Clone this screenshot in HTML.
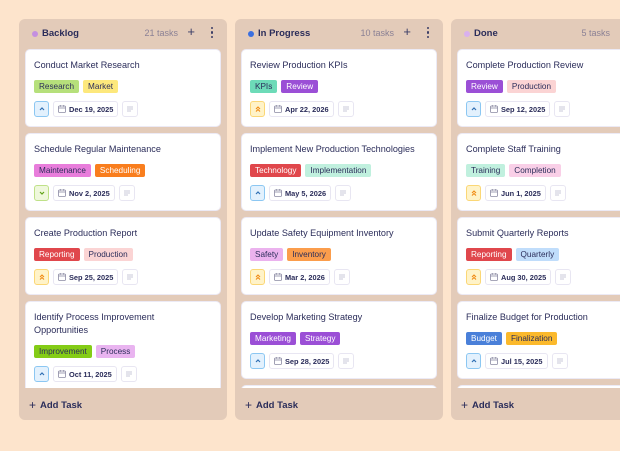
<!DOCTYPE html>
<html><head><meta charset="utf-8">
<style>
*{box-sizing:border-box;margin:0;padding:0}
body{width:620px;height:451px;background:#fde4cc;font-family:"Liberation Sans",sans-serif;position:relative;overflow:hidden;color:#2b2d5a}
.col{position:absolute;top:19px;width:208px;height:401px;background:#e3cbb9;border-radius:6px}
.hd{position:absolute;top:0;left:0;right:0;height:30px}
.dot{position:absolute;left:13px;top:12px;width:6px;height:6px;border-radius:50%}
.name{position:absolute;left:23px;top:9px;font-size:9.5px;font-weight:bold;color:#2b2d5a}
.cnt{position:absolute;right:49px;top:9px;font-size:9px;color:#8b8195}
.plus{position:absolute;right:32px;top:5px;font-size:13px;color:#3a3d66}
.more{position:absolute;right:13px;top:8px;width:3px;height:12px}
.more i{display:block;width:2.4px;height:2.4px;background:#3a3d66;border-radius:50%;margin-bottom:2px}
.list{position:absolute;top:30px;left:6px;right:6px;height:339px;overflow:hidden}
.card{background:#fff;border-radius:5px;border:1px solid #eceaf5;margin-bottom:6px;padding:0 8px;position:relative;height:78px}
.t{position:absolute;left:8px;top:9px;font-size:9.1px;line-height:13px;color:#2b2d5a;width:170px}
.tags{position:absolute;left:8px;top:30px;display:flex;gap:4px}
.tag{height:13px;line-height:13px;padding:0 5px;border-radius:2px;font-size:8.2px;color:#2b2d5a}
.w{color:#fff}
.ft{position:absolute;left:8px;top:51px;display:flex;gap:4px}
.pr{width:15px;height:16px;border-radius:3px;border:1px solid;display:flex;align-items:center;justify-content:center}
.dt{height:16px;border:1px solid #e8e6f2;border-radius:3px;font-size:7.4px;font-weight:bold;display:flex;align-items:center;padding:0 4px 0 4px;gap:3px;color:#2b2d5a}
.nt{width:16px;height:16px;border:1px solid #e8e6f2;border-radius:3px;display:flex;align-items:center;justify-content:center}
.add{position:absolute;left:10px;top:378px;font-size:9.5px;color:#2b2d5a;font-weight:bold}
.add span{font-weight:normal;font-size:12px;margin-right:4px;position:relative;top:1px}
.up{background:#e3f1fd;border-color:#8cc7f2}
.dn{background:#eff8dc;border-color:#bfe188}
.hi{background:#fff3c8;border-color:#fbd776}
</style></head><body>

<svg width="0" height="0" style="position:absolute">
<defs>
<symbol id="cal" viewBox="0 0 8 8"><rect x="0.5" y="1" width="7" height="6.5" rx="1" fill="none" stroke="#8b8aa3" stroke-width="0.8"/><line x1="0.5" y1="3" x2="7.5" y2="3" stroke="#8b8aa3" stroke-width="0.8"/><line x1="2.3" y1="0" x2="2.3" y2="1.8" stroke="#8b8aa3" stroke-width="0.8"/><line x1="5.7" y1="0" x2="5.7" y2="1.8" stroke="#8b8aa3" stroke-width="0.8"/></symbol>
<symbol id="lines" viewBox="0 0 8 8"><path d="M1 2h6M1 4h6M1 6h4" stroke="#b8b7cc" stroke-width="0.8"/></symbol>
<symbol id="u" viewBox="0 0 8 8"><path d="M2 5l2-2 2 2" fill="none" stroke="#2f6fb3" stroke-width="1.2"/></symbol>
<symbol id="d" viewBox="0 0 8 8"><path d="M2 3l2 2 2-2" fill="none" stroke="#5fa215" stroke-width="1.2"/></symbol>
<symbol id="uu" viewBox="0 0 8 8"><path d="M2 4l2-2 2 2M2 6.5l2-2 2 2" fill="none" stroke="#f08a12" stroke-width="1.1"/></symbol>
</defs></svg>

<div class="col" style="left:19px">
 <div class="hd"><div class="dot" style="background:#c48fe0"></div><div class="name">Backlog</div><div class="cnt">21 tasks</div><div class="plus">+</div><div class="more"><i></i><i></i><i></i></div></div>
 <div class="list">
  <div class="card"><div class="t">Conduct Market Research</div><div class="tags"><span class="tag" style="background:#b6e07b">Research</span><span class="tag" style="background:#fde87c">Market</span></div><div class="ft"><div class="pr up"><svg width="8" height="8"><use href="#u"/></svg></div><div class="dt"><svg width="8" height="8"><use href="#cal"/></svg>Dec 19, 2025</div><div class="nt"><svg width="8" height="8"><use href="#lines"/></svg></div></div></div>
  <div class="card"><div class="t">Schedule Regular Maintenance</div><div class="tags"><span class="tag" style="background:#e87ddb">Maintenance</span><span class="tag w" style="background:#f97e1e">Scheduling</span></div><div class="ft"><div class="pr dn"><svg width="8" height="8"><use href="#d"/></svg></div><div class="dt"><svg width="8" height="8"><use href="#cal"/></svg>Nov 2, 2025</div><div class="nt"><svg width="8" height="8"><use href="#lines"/></svg></div></div></div>
  <div class="card"><div class="t">Create Production Report</div><div class="tags"><span class="tag w" style="background:#e0474c">Reporting</span><span class="tag" style="background:#fbd4d4">Production</span></div><div class="ft"><div class="pr hi"><svg width="8" height="8"><use href="#uu"/></svg></div><div class="dt"><svg width="8" height="8"><use href="#cal"/></svg>Sep 25, 2025</div><div class="nt"><svg width="8" height="8"><use href="#lines"/></svg></div></div></div>
  <div class="card" style="height:92px"><div class="t">Identify Process Improvement Opportunities</div><div class="tags" style="top:43px"><span class="tag" style="background:#84cc16">Improvement</span><span class="tag" style="background:#e9b4f0">Process</span></div><div class="ft" style="top:64px"><div class="pr up"><svg width="8" height="8"><use href="#u"/></svg></div><div class="dt"><svg width="8" height="8"><use href="#cal"/></svg>Oct 11, 2025</div><div class="nt"><svg width="8" height="8"><use href="#lines"/></svg></div></div></div>
 </div>
 <div class="add"><span>+</span>Add Task</div>
</div>

<div class="col" style="left:235px">
 <div class="hd"><div class="dot" style="background:#3b6fe0"></div><div class="name">In Progress</div><div class="cnt">10 tasks</div><div class="plus">+</div><div class="more"><i></i><i></i><i></i></div></div>
 <div class="list">
  <div class="card"><div class="t">Review Production KPIs</div><div class="tags"><span class="tag" style="background:#6ddbb8">KPIs</span><span class="tag w" style="background:#9b4fd6">Review</span></div><div class="ft"><div class="pr hi"><svg width="8" height="8"><use href="#uu"/></svg></div><div class="dt"><svg width="8" height="8"><use href="#cal"/></svg>Apr 22, 2026</div><div class="nt"><svg width="8" height="8"><use href="#lines"/></svg></div></div></div>
  <div class="card"><div class="t">Implement New Production Technologies</div><div class="tags"><span class="tag w" style="background:#e0474c">Technology</span><span class="tag" style="background:#c0f0de">Implementation</span></div><div class="ft"><div class="pr up"><svg width="8" height="8"><use href="#u"/></svg></div><div class="dt"><svg width="8" height="8"><use href="#cal"/></svg>May 5, 2026</div><div class="nt"><svg width="8" height="8"><use href="#lines"/></svg></div></div></div>
  <div class="card"><div class="t">Update Safety Equipment Inventory</div><div class="tags"><span class="tag" style="background:#ebb2ee">Safety</span><span class="tag" style="background:#fb9d4c">Inventory</span></div><div class="ft"><div class="pr hi"><svg width="8" height="8"><use href="#uu"/></svg></div><div class="dt"><svg width="8" height="8"><use href="#cal"/></svg>Mar 2, 2026</div><div class="nt"><svg width="8" height="8"><use href="#lines"/></svg></div></div></div>
  <div class="card"><div class="t">Develop Marketing Strategy</div><div class="tags"><span class="tag w" style="background:#9b4fd6">Marketing</span><span class="tag w" style="background:#9b4fd6">Strategy</span></div><div class="ft"><div class="pr up"><svg width="8" height="8"><use href="#u"/></svg></div><div class="dt"><svg width="8" height="8"><use href="#cal"/></svg>Sep 28, 2025</div><div class="nt"><svg width="8" height="8"><use href="#lines"/></svg></div></div></div>
  <div class="card"></div>
 </div>
 <div class="add"><span>+</span>Add Task</div>
</div>

<div class="col" style="left:451px">
 <div class="hd"><div class="dot" style="background:#d9b0ee"></div><div class="name">Done</div><div class="cnt">5 tasks</div><div class="plus">+</div><div class="more"><i></i><i></i><i></i></div></div>
 <div class="list">
  <div class="card"><div class="t">Complete Production Review</div><div class="tags"><span class="tag w" style="background:#9b4fd6">Review</span><span class="tag" style="background:#fbd4d4">Production</span></div><div class="ft"><div class="pr up"><svg width="8" height="8"><use href="#u"/></svg></div><div class="dt"><svg width="8" height="8"><use href="#cal"/></svg>Sep 12, 2025</div><div class="nt"><svg width="8" height="8"><use href="#lines"/></svg></div></div></div>
  <div class="card"><div class="t">Complete Staff Training</div><div class="tags"><span class="tag" style="background:#c0f0de">Training</span><span class="tag" style="background:#f9cfe7">Completion</span></div><div class="ft"><div class="pr hi"><svg width="8" height="8"><use href="#uu"/></svg></div><div class="dt"><svg width="8" height="8"><use href="#cal"/></svg>Jun 1, 2025</div><div class="nt"><svg width="8" height="8"><use href="#lines"/></svg></div></div></div>
  <div class="card"><div class="t">Submit Quarterly Reports</div><div class="tags"><span class="tag w" style="background:#e0474c">Reporting</span><span class="tag" style="background:#c0ddfb">Quarterly</span></div><div class="ft"><div class="pr hi"><svg width="8" height="8"><use href="#uu"/></svg></div><div class="dt"><svg width="8" height="8"><use href="#cal"/></svg>Aug 30, 2025</div><div class="nt"><svg width="8" height="8"><use href="#lines"/></svg></div></div></div>
  <div class="card"><div class="t">Finalize Budget for Production</div><div class="tags"><span class="tag w" style="background:#4a80d9">Budget</span><span class="tag" style="background:#fbb92c">Finalization</span></div><div class="ft"><div class="pr up"><svg width="8" height="8"><use href="#u"/></svg></div><div class="dt"><svg width="8" height="8"><use href="#cal"/></svg>Jul 15, 2025</div><div class="nt"><svg width="8" height="8"><use href="#lines"/></svg></div></div></div>
  <div class="card"></div>
 </div>
 <div class="add"><span>+</span>Add Task</div>
</div>

</body></html>
